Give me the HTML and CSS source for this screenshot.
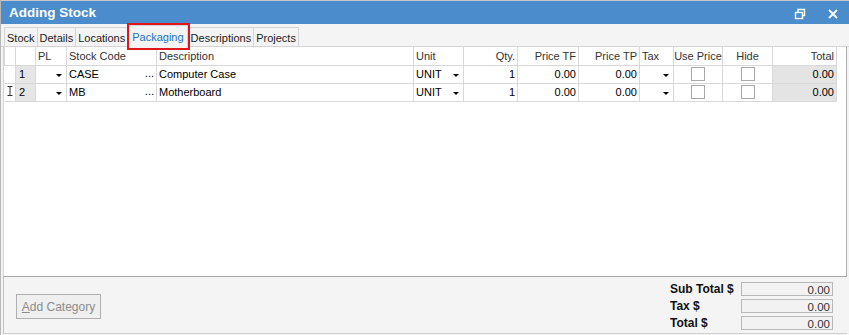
FILE: index.html
```html
<!DOCTYPE html>
<html lang="en">
<head>
    <meta charset="UTF-8">
    <title>Adding Stock</title>
    <link rel="stylesheet" href="styles.css">
</head>
<body>
    <div class="window">
        <div class="titlebar">
            <span class="title">Adding Stock</span>
            <div class="title-buttons">
                <svg width="12" height="12" viewBox="0 0 12 12">
                    <rect x="1.5" y="4.5" width="7" height="6" fill="none" stroke="#fff" stroke-width="1.4"/>
                    <path d="M4 4.5 V1.5 H10.5 V7.5 H8.5" fill="none" stroke="#fff" stroke-width="1.4"/>
                </svg>
                <svg width="12" height="12" viewBox="0 0 12 12">
                    <path d="M2 2 L10 10 M10 2 L2 10" stroke="#fff" stroke-width="1.8"/>
                </svg>
            </div>
        </div>
        <div class="tabs">
            <div class="tab">Stock</div>
            <div class="tab">Details</div>
            <div class="tab">Locations</div>
            <div class="tab active">Packaging</div>
            <div class="tab">Descriptions</div>
            <div class="tab">Projects</div>
        </div>
        <div class="grid">
            <table>
                <colgroup>
                    <col style="width:11px"><col style="width:20px"><col style="width:31px">
                    <col style="width:90px"><col style="width:257px"><col style="width:50px">
                    <col style="width:54px"><col style="width:61px"><col style="width:61px">
                    <col style="width:34px"><col style="width:49px"><col style="width:50px">
                    <col style="width:64px">
                </colgroup>
                <thead>
                    <tr>
                        <th></th><th></th><th>PL</th><th>Stock Code</th><th>Description</th><th>Unit</th>
                        <th class="num">Qty.</th><th class="num">Price TF</th><th class="num">Price TP</th>
                        <th>Tax</th><th class="center">Use Price</th><th class="center">Hide</th><th class="num">Total</th>
                    </tr>
                </thead>
                <tbody>
                    <tr>
                        <td class="ind"></td><td class="rownum">1</td>
                        <td class="drop"><span class="arrow"></span></td>
                        <td class="code">CASE<span class="dots">...</span></td>
                        <td>Computer Case</td>
                        <td class="drop">UNIT<span class="arrow"></span></td>
                        <td class="num">1</td><td class="num">0.00</td><td class="num">0.00</td>
                        <td class="drop"><span class="arrow"></span></td>
                        <td class="center"><span class="check"></span></td>
                        <td class="center"><span class="check"></span></td>
                        <td class="num total">0.00</td>
                    </tr>
                    <tr>
                        <td class="ind"><svg width="6" height="10" viewBox="0 0 6 10"><path d="M0.5 0.5 H5.5 M0.5 9.5 H5.5 M3 0.5 V9.5" stroke="#333" stroke-width="1" fill="none"/></svg></td>
                        <td class="rownum">2</td>
                        <td class="drop"><span class="arrow"></span></td>
                        <td class="code">MB<span class="dots">...</span></td>
                        <td>Motherboard</td>
                        <td class="drop">UNIT<span class="arrow"></span></td>
                        <td class="num">1</td><td class="num">0.00</td><td class="num">0.00</td>
                        <td class="drop"><span class="arrow"></span></td>
                        <td class="center"><span class="check"></span></td>
                        <td class="center"><span class="check"></span></td>
                        <td class="num total">0.00</td>
                    </tr>
                </tbody>
            </table>
        </div>
        <div class="footer">
            <button class="add-btn" disabled><u>A</u>dd Category</button>
            <div class="totals">
                <span class="label">Sub Total $</span><span class="field">0.00</span>
                <span class="label">Tax $</span><span class="field">0.00</span>
                <span class="label">Total $</span><span class="field">0.00</span>
            </div>
        </div>
    </div>
</body>
</html>
```

FILE: styles.css
```css
body, html {
    margin: 0;
    padding: 0;
    overflow: hidden;
    height: 100%;
    font-family: "Liberation Sans", Arial, sans-serif;
    font-size: 11px;
    background: #f4f4f4;
}

.window {
    height: 335px;
    display: flex;
    flex-direction: column;
    border-left: 1px solid #b6b6b6;
    box-sizing: border-box;
}

.titlebar {
    height: 24px;
    flex-shrink: 0;
    background: #4a8ccc;
    border-top: 1px solid #c8c8c8;
    box-sizing: border-box;
    display: flex;
    align-items: center;
    justify-content: space-between;
    padding: 0 10px 0 8px;
}

.title {
    color: white;
    font-weight: bold;
    font-size: 13.5px;
}

.title-buttons {
    display: flex;
    gap: 21px;
    padding-top: 3px;
}

.tabs {
    height: 22px;
    flex-shrink: 0;
    display: flex;
    align-items: flex-end;
    padding-left: 3px;
    border-bottom: 1px solid #d4d4d4;
}

.tab {
    height: 19px;
    line-height: 20px;
    padding: 0 2px;
    border: 1px solid #d4d4d4;
    border-bottom: none;
    border-left: none;
    color: #222;
    font-size: 11px;
    box-sizing: border-box;
}

.tab:first-child {
    border-left: 1px solid #d4d4d4;
}

.tab.active {
    color: #1a73c8;
    background: #f4f4f4;
    outline: 2px solid #e0161c;
    height: 23px;
    line-height: 22px;
    padding: 0 3px;
    margin: 0 1px;
    position: relative;
    top: 2px;
    z-index: 1;
}

.grid {
    flex: 1;
    margin: 0 2px 0 2px;
    background: white;
    border-left: 1px solid #d4d4d4;
    border-right: 1px solid #b0b0b0;
}

table {
    border-collapse: collapse;
    table-layout: fixed;
    width: 832px;
}

th, td {
    height: 18px;
    padding: 0 2px;
    border: 1px solid #d8d8d8;
    border-top: none;
    white-space: nowrap;
    overflow: hidden;
    text-align: left;
    box-sizing: border-box;
}

th {
    font-weight: normal;
    color: #333;
    font-size: 11px;
    height: 18px;
}

td {
    color: #000;
}

.num {
    text-align: right;
}

.center {
    text-align: center;
    padding: 0;
}

.ind {
    border-left: none;
    padding: 0 0 0 2px;
}

.rownum {
    background: #e6e6e6;
    padding-left: 3px;
}

.total {
    background: #e4e4e4;
}

.drop, .code {
    position: relative;
}

.arrow {
    position: absolute;
    right: 4px;
    top: 8px;
    border-left: 3px solid transparent;
    border-right: 3px solid transparent;
    border-top: 3px solid #000;
}

.dots {
    position: absolute;
    right: 2px;
    top: 1px;
}

.check {
    display: inline-block;
    width: 12px;
    height: 12px;
    border: 1px solid #a8a8a8;
    background: white;
    vertical-align: middle;
}

.footer {
    height: 56px;
    flex-shrink: 0;
    display: flex;
    justify-content: space-between;
    border-top: 1px solid #a8a8a8;
    border-bottom: 1px solid #d0d0d0;
    margin: 0 2px 1px 2px;
    border-left: 1px solid #c0c0c0;
}

.add-btn {
    margin: 17px 0 0 12px;
    width: 85px;
    height: 25px;
    font-family: inherit;
    font-size: 12px;
    color: #8c8c8c;
    background: #efefef;
    border: 1px solid #b0b0b0;
    padding: 0;
}

.totals {
    display: grid;
    grid-template-columns: 71px 92px;
    row-gap: 3px;
    margin: 5px 14px 0 0;
    align-content: start;
}

.label {
    font-weight: bold;
    font-size: 12px;
    color: #111;
    line-height: 14px;
}

.field {
    height: 14px;
    border: 1px solid #b8b8b8;
    background: #f2f2f2;
    text-align: right;
    color: #333;
    padding-right: 2px;
    line-height: 14px;
    box-sizing: border-box;
    font-size: 11.5px;
}
```
